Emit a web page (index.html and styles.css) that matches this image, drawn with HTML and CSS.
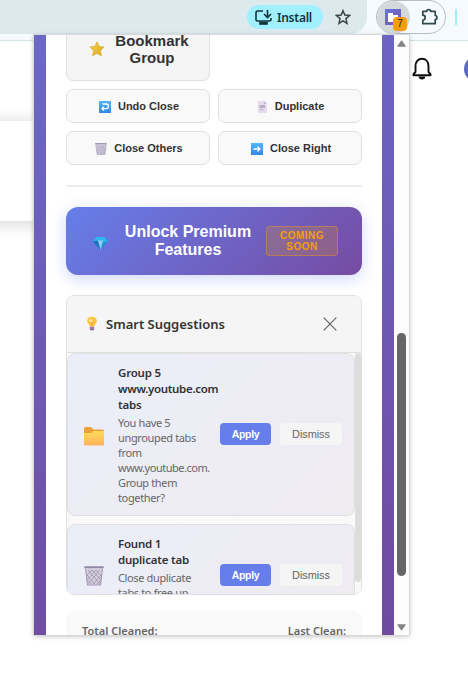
FILE: index.html
```html
<!DOCTYPE html>
<html lang="en">
<head>
<meta charset="utf-8">
<title>Tab Manager</title>
<link rel="stylesheet" href="styles.css">
</head>
<body>
<svg class="defs" width="0" height="0">
  <defs>
    <linearGradient id="blue" x1="0" y1="0" x2="0" y2="1"><stop offset="0" stop-color="#55b4fb"/><stop offset="1" stop-color="#3487e6"/></linearGradient>
    <linearGradient id="yellow" x1="0" y1="0" x2="0" y2="1"><stop offset="0" stop-color="#ffda58"/><stop offset="1" stop-color="#ffb35c"/></linearGradient>
    <linearGradient id="gold" x1="0" y1="0" x2="1" y2="1"><stop offset="0" stop-color="#f3cf45"/><stop offset="1" stop-color="#dba927"/></linearGradient>
    <linearGradient id="logo" x1="0" y1="0" x2="1" y2="1"><stop offset="0" stop-color="#6977dc"/><stop offset="1" stop-color="#7652b0"/></linearGradient>
    <symbol id="bin" viewBox="0 0 20 20">
      <path d="M1.500 2.500h17L17 19H4z" fill="#d4cfdd"/>
      <path d="M4 4l12 14M8 4l9 10M12 4l5 6M3 9l8 9M3.500 14l4 4M16 4L4 18M12 4L3 14M8 4L3 9M17 9l-8 9M17 14l-4 4" stroke="#9d93b0" stroke-width=".8" fill="none"/>
      <path d="M.3 1.300h19.400" stroke="#9188a4" stroke-width="2"/>
      <path d="M1.500 2.500L3.500 19h13l2-16.500" stroke="#a399b5" stroke-width="1.100" fill="none"/>
    </symbol>
  </defs>
</svg>
<header class="toolbar">
  <div class="omnibox">
    <div class="install">
      <svg width="17" height="15" viewBox="0 0 17 15" fill="none" stroke="#12343b" stroke-width="1.600"><path d="M8 1H2.500Q1 1 1 2.500v7Q1 11 2.500 11h12Q16 11 16 9.500V8"/><path d="M12.500 0v7M9 4l3.500 3.500L16 4"/><path d="M5 12.500h7v1.500H5z" fill="#12343b"/></svg>
      <span>Install</span>
    </div>
    <svg class="star" width="16" height="16" viewBox="0 0 16 16" fill="none" stroke="#3c4548" stroke-width="1.500"><path d="M8 1.700l1.800 4.400 4.700.4-3.600 3.100 1.100 4.700L8 11.800l-4 2.500 1.100-4.700-3.600-3.100 4.700-.4z"/></svg>
  </div>
  <div class="extensions">
    <div class="ext-active">
      <svg width="16" height="16" viewBox="0 0 16 16"><path d="M0 0h16v16H0z" fill="url(#logo)"/><path d="M3 4h5v2h5v7H3z" fill="#fff"/></svg>
      <span class="badge">7</span>
    </div>
    <svg class="puzzle" width="18" height="18" viewBox="0 0 18 18" fill="none" stroke="#304a50" stroke-width="1.700"><path d="M1.800 3.300H5.700a2 1.700 0 0 1 4 0h4.500v4.200a1.700 2 0 0 1 0 4v4.200H1.800V12a2.400 2.400 0 0 0 0-4.800z" stroke-linejoin="round"/></svg>
  </div>
  <i class="separator"></i>
</header>
<div class="page-shade"></div>
<svg class="bell" width="20" height="24" viewBox="0 0 20 24"><path d="M1.500 18.300v-1.100l2-2.200V9.200C3.500 5 6 1.800 10 1.800S16.500 5 16.500 9.200V15l2 2.200v1.100z" fill="none" stroke="#0f0f0f" stroke-width="1.900" stroke-linejoin="round"/><path d="M6.500 19.500h7Q13 22.500 10 22.500T6.500 19.500z" fill="#0f0f0f"/></svg>
<div class="avatar"></div>

<div class="popup">
  <div class="frame">
    <main class="content">
      <div class="actions">
        <button class="action big">
          <svg width="16" height="16" viewBox="0 0 16 16"><path d="M8 .9l2.100 4.500 5 .6-3.600 3.500.9 5.300L8 12.400l-4.400 2.400.9-5.300L.9 6l5-.6z" fill="url(#gold)" stroke="#d9ae35" stroke-width=".8" stroke-linejoin="round"/></svg>
          <span>Bookmark<br>Group</span>
        </button>
        <span></span>
        <button class="action"><svg width="12" height="12" viewBox="0 0 12 12"><path d="M0 0h12v12H0z" fill="url(#blue)"/><path d="M3.500 3h3.700a2.100 2.100 0 0 1 0 4.600H3M5 5.600l-2 2 2 2" fill="none" stroke="#fff" stroke-width="1.300"/></svg><span>Undo Close</span></button>
        <button class="action"><svg class="doc" width="9" height="12" viewBox="0 0 9 12"><path d="M0 0h6l3 3v9H0z" fill="#e5dcef"/><path d="M6 0v3h3z" fill="#c3b6d0"/><path d="M1.500 4h5.500v3H1.500z" fill="#b9adc2"/><path d="M1.500 8.700h4" stroke="#b9adc2"/></svg><span>Duplicate</span></button>
        <button class="action"><svg width="12" height="12"><use href="#bin"/></svg><span>Close Others</span></button>
        <button class="action"><svg width="12" height="12" viewBox="0 0 12 12"><path d="M0 0h12v12H0z" fill="url(#blue)"/><path d="M2.500 6H9M6.500 3.500L9 6 6.500 8.500" fill="none" stroke="#fff" stroke-width="1.300"/></svg><span>Close Right</span></button>
      </div>
      <hr class="divider">
      <button class="premium">
        <svg width="15" height="13" viewBox="0 0 15 13"><path d="M3.500 0h8L15 4.500 7.500 13 0 4.500z" fill="#198fd5"/><path d="M3.500 0h8L15 4.500H0z" fill="#2bb7ed"/><path d="M4.700 3.500h5.600L7.500 13z" fill="#8dcdf3"/><path d="M0 4.500l4.700-1L7.500 13z" fill="#2171bf"/></svg>
        <span class="premium-title">Unlock Premium<br>Features</span>
        <span class="soon">COMING<br>SOON</span>
      </button>
      <section class="suggestions">
        <div class="sug-head">
          <svg width="10" height="14" viewBox="0 0 10 14"><path d="M2.700 9.500Q2.700 8 1.200 6.500A4.600 4.600 0 1 1 8.800 6.500Q7.300 8 7.300 9.500z" fill="#fcc43c"/><circle cx="3.700" cy="3.400" r="1.700" fill="#ffe7a0"/><path d="M3.500 5.500L5 7l1.500-1.500M5 7v3" fill="none" stroke="#ef9140" stroke-width=".8"/><path d="M2.800 9.700h4.400v2.800l-1 1H3.800l-1-1z" fill="#9a78a6"/></svg>
          <h3>Smart Suggestions</h3>
          <svg class="close" width="14" height="14" viewBox="0 0 14 14"><path d="M.7.7l12.600 12.600M13.300.7L.7 13.300" stroke="#666" stroke-width="1.200"/></svg>
        </div>
        <div class="sug-body">
          <div class="sug-list">
            <article class="sug">
              <svg class="sug-icon" width="20" height="20" viewBox="0 0 20 20"><path d="M0 2.500Q0 1 1.500 1H7l2.500 2.500h9Q20 3.500 20 5v6H0z" fill="#e9a13a"/><path d="M0 7h7.500l2-2H20v13.500q0 1-1 1H1q-1 0-1-1z" fill="url(#yellow)"/></svg>
              <div class="sug-text"><h4>Group 5<br><span class="host-title">www.youtube.com</span><br>tabs</h4><p>You have 5<br>ungrouped tabs<br>from<br><span class="host">www.youtube.com.</span><br>Group them<br>together?</p></div>
              <button class="apply">Apply</button><button class="dismiss">Dismiss</button>
            </article>
            <article class="sug second">
              <svg class="sug-icon" width="20" height="20"><use href="#bin"/></svg>
              <div class="sug-text"><h4>Found 1<br>duplicate tab</h4><p>Close duplicate<br>tabs to free up</p></div>
              <button class="apply">Apply</button><button class="dismiss">Dismiss</button>
            </article>
          </div>
          <div class="track"><div class="thumb"></div></div>
        </div>
      </section>
      <footer class="stats"><span>Total Cleaned:</span><span>Last Clean:</span></footer>
    </main>
  </div>
  <div class="scrollbar">
    <svg width="9" height="7" viewBox="0 0 9 7"><path d="M4.500.8L8.300 6.200H.7z" fill="#858585" stroke="#858585" stroke-linejoin="round"/></svg>
    <div class="scroll-thumb"></div>
    <svg class="down" width="9" height="7" viewBox="0 0 9 7"><path d="M4.500 6.200L8.300.8H.7z" fill="#858585" stroke="#858585" stroke-linejoin="round"/></svg>
  </div>
</div>
</body>
</html>
```
FILE: styles.css
```css
* { box-sizing: border-box; }
body { margin: 0; width: 468px; height: 690px; overflow: hidden; position: relative; background: #fff; font-family: "Noto Sans", "Open Sans", sans-serif; color: #333; }
button { margin: 0; font-family: "Liberation Sans", Arial, sans-serif; color: #333; white-space: nowrap; }
svg { display: block; flex: none; }
h3, h4, p { margin: 0; }
.defs { position: absolute; }

.toolbar { height: 41px; background: #f4fafd; border-bottom: 1px solid #d5e2e7; display: flex; align-items: flex-start; }
.omnibox { flex: none; width: 367px; height: 34px; background: #dceaee; border-bottom-right-radius: 17px; display: flex; padding-left: 247px; }
.install { margin-top: 5px; width: 76px; height: 24px; border-radius: 12px; background: #a0f0ff; display: flex; align-items: center; padding-left: 8px; gap: 5px; font-size: 12px; letter-spacing: -.25px; font-weight: 600; color: #12343b; }
.star { margin: 9px 0 0 12px; }
.extensions { width: 70px; height: 34px; border: 1px solid #b4bfc4; border-radius: 17px; margin-left: 9px; display: flex; }
.ext-active { width: 33px; height: 33px; background: #d3d8da; border-radius: 50%; padding: 8px 0 0 8px; position: relative; }
.badge { position: absolute; left: 16px; top: 16px; width: 14px; height: 14px; border-radius: 4px; background: #f59e0b; color: #222; font: 10px/14px "Liberation Sans", sans-serif; text-align: center; }
.puzzle { margin: 7px 0 0 11px; }
.separator { width: 2px; height: 16px; background: #a0f0ff; margin: 9px 0 0 9px; }
.page-shade { position: absolute; left: -20px; top: 121px; width: 70px; height: 100px; background: #fff; box-shadow: 0 2px 16px rgba(0,0,0,.18); }
.bell { position: absolute; left: 412px; top: 57px; }
.avatar { position: absolute; left: 464px; top: 56px; width: 26px; height: 26px; border-radius: 50%; background: #5c6bc0; }

.popup { position: absolute; left: 34px; top: 35px; width: 375px; height: 600px; display: flex; overflow: hidden; background: #fff; box-shadow: 0 0 0 1px #d8d8d8, 0 1px 5px rgba(0,0,0,.3); }
.frame { width: 360px; padding: 0 12px; background: linear-gradient(167deg, #6b68c8 0%, #704a9f 100%); }
.content { height: 600px; overflow: hidden; background: #fff; padding: 0 20px; }
.actions { display: grid; grid-template-columns: 144px 144px; gap: 8px; }
.action { height: 34px; border: 1px solid #e0e0e0; border-radius: 7px; background: #f9f9f9; display: flex; align-items: center; justify-content: center; gap: 7px; padding: 0 0 0 2px; font-size: 11px; font-weight: 700; }
.action svg { position: relative; top: 1px; }
.action .doc { margin-right: 1px; }
.actions .big { height: 66px; margin-top: -20px; background: #f5f5f5; font-size: 15px; line-height: 17px; gap: 10px; padding: 2px 0 0 2px; }
.actions .big svg { top: 0; }
.divider { border: 0; height: 2px; background: #ececec; margin: 20px 0; }
.premium { width: 296px; height: 68px; border: 0; border-radius: 12px; padding: 0 0 0 27px; display: flex; align-items: center; background: linear-gradient(135deg, #667eea, #764ba2); color: #fff; box-shadow: 0 4px 15px rgba(102,126,234,.3); }
.premium > svg { margin-top: 4px; }
.premium-title { width: 128px; margin-left: 16px; font-size: 16px; line-height: 18px; font-weight: 700; text-align: center; }
.soon { width: 72px; height: 30px; margin-left: 14px; border: 1px solid rgba(245,158,11,.4); border-radius: 4px; background: rgba(245,158,11,.2); color: #f59e0b; font-size: 10px; line-height: 11px; font-weight: 700; letter-spacing: .5px; text-align: center; padding-top: 3px; }
.suggestions { margin-top: 20px; height: 300px; border: 1px solid #e0e0e0; border-radius: 8px; overflow: hidden; background: #f9f9f9; }
.sug-head { height: 57px; background: #f5f5f5; border-bottom: 1px solid #e0e0e0; display: flex; align-items: center; padding: 0 17px 0 20px; }
.sug-head h3 { font-size: 13px; line-height: 20px; font-weight: 600; margin-left: 9px; white-space: nowrap; }
.close { margin-left: auto; margin-right: 7px; }
.sug-body { height: 241px; display: flex; overflow: hidden; }
.sug-list { width: 288px; flex: none; }
.sug { height: 163px; border: 1px solid #e0e0e0; border-radius: 8px; background: linear-gradient(135deg, #ebeef8, #efebf1); display: flex; align-items: center; padding: 0 12px 0 16px; }
.sug.second { height: 104px; margin-top: 8px; }
.sug-icon { margin-top: 3px; }
.second .sug-icon { margin-top: 0; }
.sug-text { width: 102px; flex: none; margin-left: 14px; white-space: nowrap; }
.second .sug-text { padding-bottom: 17px; }
.sug h4 { font-size: 11.500px; line-height: 16px; font-weight: 600; letter-spacing: -.22px; }
.host-title { letter-spacing: -.33px; }
.sug p { font-size: 11px; line-height: 15px; letter-spacing: -.36px; color: #666; margin-top: 2px; }
.host { letter-spacing: -.47px; }
.apply, .dismiss { border: 0; height: 22px; border-radius: 4px; padding: 0; flex: none; position: relative; top: -1px; }
.apply { width: 51px; background: #667eea; color: #fff; font-size: 10.500px; font-weight: 700; letter-spacing: -.3px; }
.dismiss { width: 62px; margin-left: 9px; background: #f5f5f5; color: #666; font-size: 11px; letter-spacing: -.1px; }
.track { width: 6px; background: #f9f9f9; }
.thumb { width: 6px; height: 229px; background: #ddd; border-radius: 3px; }
.stats { margin-top: 16px; height: 60px; border-radius: 8px; background: #f9f9f9; display: flex; justify-content: space-between; padding: 11px 16px; font-size: 11px; line-height: 18px; font-weight: 600; color: #666; }
.scrollbar { width: 15px; background: #fcfcfc; display: flex; flex-direction: column; align-items: center; padding: 5px 0 4px; }
.scroll-thumb { width: 9px; height: 243px; margin-top: 286px; border-radius: 5px; background: #666; }
.scrollbar .down { margin-top: auto; }
```
